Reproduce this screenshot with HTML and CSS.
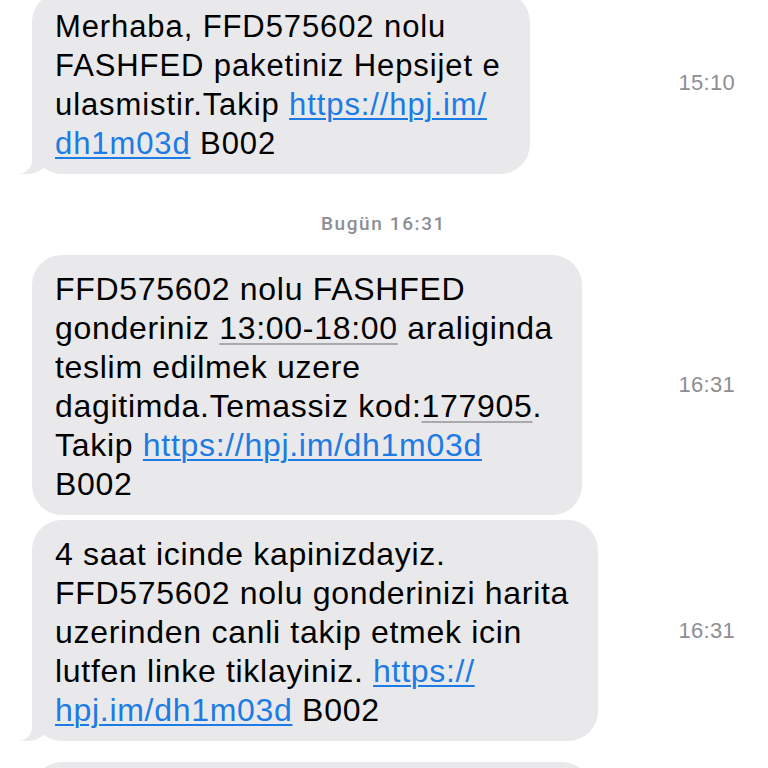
FILE: index.html
```html
<!DOCTYPE html>
<html lang="tr">
<head>
  <meta charset="UTF-8" />
  <meta name="viewport" content="width=device-width, initial-scale=1.0"/>
  <title>Mesajlar</title>
  <link rel="stylesheet" href="styles.css">
</head>
<body>

  <!-- Message thread -->
  <main class="thread">

    <div class="row first">
      <div class="bubble tail">
        Merhaba, FFD575602 nolu<br>
        FASHFED paketiniz Hepsijet e<br>
        ulasmistir.Takip <a class="link" href="#">https://hpj.im/</a><br>
        <a class="link" href="#">dh1m03d</a> B002
      </div>
      <span class="time">15:10</span>
    </div>

    <div class="day-label">Bugün 16:31</div>

    <div class="row">
      <div class="bubble large">
        FFD575602 nolu FASHFED<br>
        gonderiniz <span class="detect">13:00-18:00</span> araliginda<br>
        teslim edilmek uzere<br>
        dagitimda.Temassiz kod:<span class="detect">177905</span>.<br>
        Takip <a class="link" href="#">https://hpj.im/dh1m03d</a><br>
        B002
      </div>
      <span class="time">16:31</span>
    </div>

    <div class="row">
      <div class="bubble large tail">
        4 saat icinde kapinizdayiz.<br>
        FFD575602 nolu gonderinizi harita<br>
        uzerinden canli takip etmek icin<br>
        lutfen linke tiklayiniz. <a class="link" href="#">https://</a><br>
        <a class="link" href="#">hpj.im/dh1m03d</a> B002
      </div>
      <span class="time">16:31</span>
    </div>

    <!-- next message, only its top edge is on screen -->
    <div class="row next">
      <div class="bubble empty"></div>
    </div>

  </main>

</body>
</html>
```

FILE: styles.css
```css
/* General styles */
body {
  margin: 0;
  padding: 0;
  background: #fff;
  color: #000;
  font-family: "Liberation Sans", Arial, sans-serif;
  overflow: hidden;
}

.thread {
  display: flex;
  flex-direction: column;
  gap: 5px;
  padding: 0 33px 0 32px;
}

/* Message row: bubble on the left, time swiped in on the right */
.row {
  display: flex;
  align-items: center;
  justify-content: space-between;
}

.row.first {
  margin-top: -8px;
}

.row.next {
  margin-top: 16px;
}

.bubble {
  position: relative;
  background: #e9e9eb;
  border-radius: 30px;
  padding: 15px 29px 11px 23px;
  font-size: 31px;
  line-height: 39px;
  letter-spacing: 0.9px;
  white-space: nowrap;
}

.bubble.large {
  font-size: 32px;
  letter-spacing: 0.7px;
}

.bubble.empty {
  width: 560px;
  height: 120px;
  padding: 0;
}

/* iMessage style tail on the last bubble of a group */
.bubble.tail::before {
  content: "";
  position: absolute;
  bottom: 0;
  left: -13px;
  width: 30px;
  height: 28px;
  background: #e9e9eb;
  border-bottom-right-radius: 22px 18px;
}

.bubble.tail::after {
  content: "";
  position: absolute;
  bottom: 0;
  left: -30px;
  width: 30px;
  height: 30px;
  background: #fff;
  border-bottom-right-radius: 14px;
}

.link {
  color: #1c7be4;
  text-decoration: underline;
  text-decoration-thickness: 2px;
  text-underline-offset: 3px;
}

.detect {
  text-decoration: underline;
  text-decoration-color: #a9a9ae;
  text-decoration-thickness: 2px;
  text-underline-offset: 4px;
}

.time {
  color: #8e8e93;
  font-size: 22px;
  letter-spacing: 0.3px;
}

.day-label {
  text-align: center;
  color: #8e8e93;
  font-family: Roboto, "Liberation Sans", sans-serif;
  font-weight: 500;
  font-size: 19px;
  line-height: 22px;
  letter-spacing: 1.6px;
  margin: 34px 0 15px;
}
```
